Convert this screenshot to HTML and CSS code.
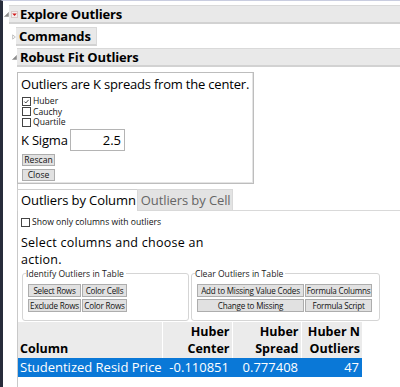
FILE: index.html
```html
<!DOCTYPE html>
<html>
<head>
<meta charset="utf-8">
<link rel="stylesheet" href="styles.css">
</head>
<body>
<div class="screen">
  <div class="head h-top">
    <svg class="tog tog-top" viewBox="0 0 6 6"><polygon points="5.5,0.5 5.5,5.5 0.5,5.5" fill="#8a8a8a" stroke="#8a8a8a" stroke-width="0.6"/></svg>
    <div class="bar full">
      <svg class="redtri" viewBox="0 0 7 7"><rect x="0.5" y="0.5" width="6" height="6" fill="#f4eeee" stroke="#d9c8c8"/><polygon points="1.2,2.4 5.8,2.4 3.5,5" fill="#d11a1a"/></svg>
      <span class="htext">Explore Outliers</span>
    </div>
  </div>
  <div class="kids">
    <div class="head h-cmd">
      <svg class="tog" viewBox="0 0 6 8"><polygon points="1,0.8 5,4 1,7.2" fill="none" stroke="#9a9a9a" stroke-width="0.9"/></svg>
      <div class="bar short"><span class="htext">Commands</span></div>
    </div>
    <div class="head h-rob">
      <svg class="tog" viewBox="0 0 6 6"><polygon points="5.5,0.5 5.5,5.5 0.5,5.5" fill="#8a8a8a" stroke="#8a8a8a" stroke-width="0.6"/></svg>
      <div class="bar full"><span class="htext">Robust Fit Outliers</span></div>
    </div>
    <div class="body">
      <div class="kbox">
        <div class="big">Outliers are K spreads from the center.</div>
        <div class="checks">
          <div class="cb"><span class="box"><svg viewBox="0 0 9 9"><polyline points="1.8,4.6 3.6,6.4 7.2,2.4" fill="none" stroke="#222" stroke-width="1.1"/></svg></span>Huber</div>
          <div class="cb"><span class="box"></span>Cauchy</div>
          <div class="cb"><span class="box"></span>Quartile</div>
        </div>
        <div class="krow"><span class="big klabel">K Sigma</span><span class="input">2.5</span></div>
        <div class="btn bsm">Rescan</div>
        <div class="btn bsm">Close</div>
      </div>
      <div class="tabs">
        <div class="tab active">Outliers by Column</div>
        <div class="tab">Outliers by Cell</div>
      </div>
      <div class="cb cb-show"><span class="box"></span>Show only columns with outliers</div>
      <div class="para">
        <div class="pline">Select columns and choose an</div>
        <div class="pline">action.</div>
      </div>
      <div class="groups">
        <fieldset class="grp g1">
          <legend>Identify Outliers in Table</legend>
          <div class="bgrid bg1">
            <div class="btn">Select Rows</div>
            <div class="btn">Color Cells</div>
            <div class="btn">Exclude Rows</div>
            <div class="btn">Color Rows</div>
          </div>
        </fieldset>
        <fieldset class="grp g2">
          <legend>Clear Outliers in Table</legend>
          <div class="bgrid bg2">
            <div class="btn">Add to Missing Value Codes</div>
            <div class="btn">Formula Columns</div>
            <div class="btn">Change to Missing</div>
            <div class="btn">Formula Script</div>
          </div>
        </fieldset>
      </div>
      <table class="tbl">
        <colgroup><col class="c1"><col class="c2"><col class="c3"><col class="c4"></colgroup>
        <thead>
          <tr><th class="left">Column</th><th>Huber<br>Center</th><th>Huber<br>Spread</th><th>Huber N<br>Outliers</th></tr>
        </thead>
        <tbody>
          <tr class="sel"><td class="left">Studentized Resid Price</td><td>-0.110851</td><td>0.777408</td><td>47</td></tr>
        </tbody>
      </table>
    </div>
  </div>
</div>
</body>
</html>
```

FILE: styles.css
```css
* { box-sizing: border-box; }
body {
  margin: 0;
  background: #fff;
  font-family: "Open Sans", "Noto Sans", sans-serif;
  color: #000;
}
.screen {
  width: 400px;
  height: 387px;
  border-left: 3px solid #272c3b;
  border-top: 1px solid #c9cde0;
  overflow: hidden;
  background: #fff;
}
.head { display: flex; align-items: center; }
.h-top { margin-top: 4px; }
.h-cmd { margin-top: 3px; }
.h-rob { margin-top: 2px; }
.tog { width: 5px; height: 5px; flex: none; margin-right: 0; }
.h-cmd .tog { width: 4px; height: 6px; }
.tog-top { margin-left: 1px; margin-right: 0; }
.bar {
  height: 19px;
  background: #e9e9e9;
  border-top: 1px solid #d9d9d9;
  border-bottom: 2px solid #d2d2d2;
  display: flex;
  align-items: center;
  padding-left: 3px;
}
.bar.full { flex: 1; }
.bar.short { width: 81px; border-right: 1px solid #d9d9d9; }
.h-top .bar { padding-left: 2px; }
.redtri { width: 7px; height: 7px; margin-right: 2px; flex: none; }
.htext { font-weight: 700; font-size: 13px; line-height: 16px; letter-spacing: -0.15px; }
.kids { padding-left: 9px; }
.body {
  margin-left: 5px;
  border-left: 1px solid #c9c9c9;
  padding-bottom: 20px;
}
.kbox {
  margin-top: 5px;
  margin-left: -1px;
  width: 237px;
  height: 112px;
  border: 1px solid #bdbdbd;
  box-shadow: inset -1px -1px 0 #e4e4e4;
  padding: 2px 2px 0 3px;
}
.big { font-size: 13px; line-height: 18px; letter-spacing: -0.2px; white-space: nowrap; }
.checks { margin-top: 3px; }
.cb {
  display: flex;
  align-items: center;
  font-size: 8.6px;
  line-height: 10.5px;
  height: 10.5px;
  color: #111;
  white-space: nowrap;
}
.box {
  width: 9px;
  height: 9px;
  border: 1px solid #444;
  background: #fff;
  margin-left: 1px;
  margin-right: 2px;
  flex: none;
  display: flex;
}
.box svg { width: 7px; height: 7px; }
.krow { display: flex; align-items: center; margin-top: 1.5px; height: 22px; }
.klabel { width: 49px; flex: none; }
.input {
  width: 55px;
  height: 22px;
  border: 1px solid #b4b4b4;
  font-size: 13px;
  line-height: 20px;
  text-align: right;
  padding-right: 3px;
}
.btn {
  height: 12px;
  background: #e1e1e1;
  border: 1px solid #adadad;
  font-size: 8.6px;
  line-height: 10px;
  text-align: center;
  color: #111;
  white-space: nowrap;
  overflow: hidden;
}
.bsm { width: 33px; margin-left: 1px; margin-top: 3px; }
.tabs {
  margin-top: 5px;
  display: flex;
  height: 22px;
  border-bottom: 1px solid #d9d9d9;
  margin-left: -1px;
}
.tab {
  font-size: 13px;
  letter-spacing: -0.1px;
  line-height: 20px;
  padding: 0 1px 0 3px;
  color: #666;
  background: #e3e3e3;
  border: 1px solid #d9d9d9;
  border-bottom: none;
}
.tab.active {
  background: #fff;
  color: #000;
  height: 22px;
  margin-bottom: -1px;
  border-color: #cfcfcf;
  border-right: none;
}
.cb-show { margin-top: 6px; margin-left: 2px; }
.para { margin-top: 6px; padding-left: 3px; }
.pline { font-size: 12.5px; letter-spacing: 0.25px; line-height: 17px; height: 17px; white-space: nowrap; }
.groups { display: flex; gap: 2px; margin-left: 4px; }
.grp {
  margin: 0;
  border: 1px solid #d5d5d5;
  border-radius: 3px;
  padding: 0 0 7px 5px;
  height: 53px;
}
.grp legend {
  font-size: 8.6px;
  line-height: 12px;
  padding: 0 2px 0 0;
  margin-left: -2px;
  color: #222;
}
.g1 { width: 167px; }
.g2 { width: 189px; }
.bgrid { display: grid; column-gap: 1px; row-gap: 2px; margin-top: 4px; }
.bg1 { grid-template-columns: 53px 45px; }
.bg2 { grid-template-columns: 107px 67px; }
.bgrid .btn { height: 13px; line-height: 11px; font-size: 8.1px; letter-spacing: -0.2px; }
.tbl {
  border-collapse: collapse;
  margin-top: 1px;
  table-layout: fixed;
  width: 344px;
  font-size: 13px;
}
.c1 { width: 144px; }
.c2 { width: 70px; }
.c3 { width: 69px; }
.c4 { width: 61px; }
.tbl th {
  background: #ebebeb;
  font-weight: 700;
  font-size: 12.5px;
  text-align: right;
  vertical-align: bottom;
  line-height: 17px;
  padding: 1px 2px 1px 2px;
  border-left: 1px solid #fff;
  height: 36px;
  white-space: nowrap;
}
.tbl th:first-child { border-left: none; }
.tbl td {
  text-align: right;
  line-height: 18px;
  height: 19px;
  padding: 0 3px 0 2px;
  white-space: nowrap;
}
.tbl .left { text-align: left; }
.sel td { background: #0a78d7; color: #fff; }
```
